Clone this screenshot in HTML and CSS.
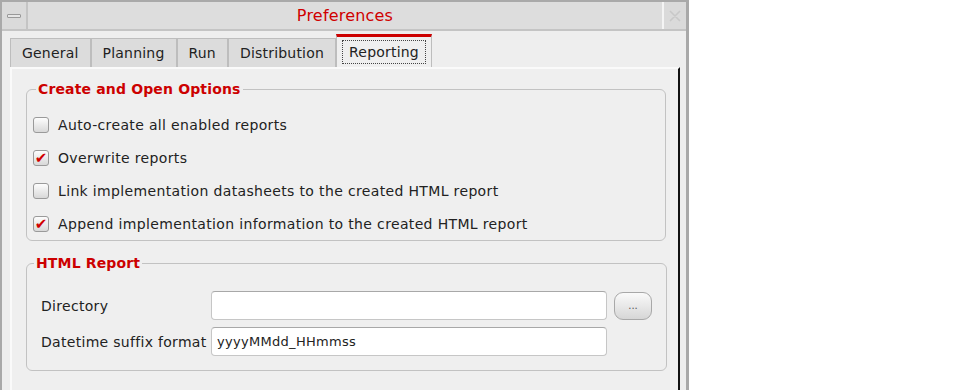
FILE: index.html
```html
<!DOCTYPE html>
<html lang="en">
<head>
  <meta charset="UTF-8">
  <title>Preferences</title>
  <link rel="stylesheet" href="styles.css">
</head>
<body>
  <div class="window">
    <div class="titlebar">
      <div class="tb-btn"><span class="min-bar"></span></div>
      <div class="title">Preferences</div>
      <div class="tb-btn close">
        <svg width="14" height="14" viewBox="0 0 14 14">
          <path d="M2 2 L5 5 M12 2 L9 5 M2 12 L5 9 M12 12 L9 9 M5 5 L9 9 M9 5 L5 9" stroke="#c8c8c8" stroke-width="1.6" fill="none"/>
        </svg>
      </div>
    </div>

    <div class="tabs">
      <div class="tab">General</div>
      <div class="tab">Planning</div>
      <div class="tab">Run</div>
      <div class="tab">Distribution</div>
      <div class="tab active"><span class="focus">Reporting</span></div>
    </div>

    <div class="panel">
      <fieldset class="group">
        <legend>Create and Open Options</legend>
        <label class="check"><span class="box"></span>Auto-create all enabled reports</label>
        <label class="check"><span class="box on">&#10004;</span>Overwrite reports</label>
        <label class="check"><span class="box"></span>Link implementation datasheets to the created HTML report</label>
        <label class="check"><span class="box on">&#10004;</span>Append implementation information to the created HTML report</label>
      </fieldset>

      <fieldset class="group html">
        <legend>HTML Report</legend>
        <div class="field">
          <span class="label">Directory</span>
          <input class="text" type="text" value="">
          <button class="browse">...</button>
        </div>
        <div class="field">
          <span class="label">Datetime suffix format</span>
          <input class="text" type="text" value="yyyyMMdd_HHmmss">
          <span class="spacer"></span>
        </div>
      </fieldset>
    </div>
  </div>
</body>
</html>
```

FILE: styles.css
```css
* {
  margin: 0;
  padding: 0;
  box-sizing: border-box;
}
body {
  background: #fff;
  font-family: 'DejaVu Sans', sans-serif;
  font-size: 14px;
  letter-spacing: 0.35px;
  color: #222;
}
.window {
  width: 689px;
  height: 390px;
  background: #eeeeee;
  border-left: 2px solid #a9a9a9;
  border-right: 3px solid #a9a9a9;
  border-top: 2px solid #a9a9a9;
  overflow: hidden;
}
.titlebar {
  display: flex;
  height: 29px;
  background: #dddddd;
  border-bottom: 2px solid #c4c4c4;
}
.tb-btn {
  width: 26px;
  display: flex;
  align-items: center;
  justify-content: center;
  border-right: 2px solid #c4c4c4;
  background: #dadada;
}
.tb-btn.close {
  border-right: none;
  border-left: 2px solid #f4f4f4;
  width: 24px;
}
.min-bar {
  width: 14px;
  height: 4px;
  background: #e6e6e6;
  border: 1px solid #999;
  border-radius: 1px;
}
.title {
  flex: 1;
  text-align: center;
  color: #d00000;
  font-size: 16px;
  letter-spacing: 0.2px;
  line-height: 28px;
}
.tabs {
  display: flex;
  margin: 2px 0 0 8px;
  height: 34px;
  align-items: flex-end;
}
.tab {
  height: 29px;
  padding: 0 11px;
  line-height: 28px;
  font-size: 14px;
  letter-spacing: 0.2px;
  background: #dcdcdc;
  border: 1px solid #bdbdbd;
  border-bottom: none;
  color: #222;
}
.tab.active {
  height: 33px;
  background: #efefef;
  border-top: 3px solid #cc0000;
  padding: 0 5px;
  line-height: 24px;
}
.focus {
  display: inline-block;
  border: 1px dotted #444;
  padding: 0 6px;
  line-height: 22px;
  margin-top: 3px;
}
.panel {
  margin: 0 6px 0 8px;
  height: 330px;
  border-top: 2px solid #fafafa;
  border-left: 2px solid #fafafa;
  border-right: 2px solid #111;
  padding: 12px 12px 0 14px;
  background: #efefef;
}
.group {
  border: 1px solid #c2c2c2;
  border-radius: 6px;
  padding: 11px 0 0 6px;
  margin-bottom: 14px;
}
.group legend {
  color: #cc0000;
  font-weight: bold;
  font-size: 14px;
  letter-spacing: 0.15px;
  padding: 0 2px;
  margin-left: 3px;
}
.check {
  display: flex;
  align-items: center;
  height: 33px;
}
.box {
  width: 16px;
  height: 16px;
  margin-right: 9px;
  border: 1px solid #9a9a9a;
  border-radius: 3px;
  background: linear-gradient(#fdfdfd, #d8d8d8);
  color: #d00000;
  font-size: 15px;
  font-weight: bold;
  line-height: 14px;
  letter-spacing: 0;
  text-align: center;
}
.group.html {
  padding: 20px 14px 14px 14px;
}
.group.html legend {
  margin-left: -7px;
}
.field {
  display: flex;
  align-items: center;
  margin-bottom: 7px;
}
.field:last-child {
  margin-bottom: 0;
}
.label {
  width: 170px;
  letter-spacing: 0.3px;
}
.text {
  width: 396px;
  height: 29px;
  border: 1px solid #c6c6c6;
  border-top-color: #a8a8a8;
  border-radius: 4px;
  background: #fff;
  font-family: 'DejaVu Sans', sans-serif;
  font-size: 13px;
  letter-spacing: 0.3px;
  padding: 0 5px;
  color: #222;
}
.browse {
  width: 38px;
  height: 28px;
  margin-left: 7px;
  border: 1px solid #a8a8a8;
  border-radius: 9px;
  background: linear-gradient(#fafafa, #d6d6d6);
  font-family: 'DejaVu Sans', sans-serif;
  font-size: 10px;
  color: #555;
}
.spacer {
  width: 45px;
}
```
